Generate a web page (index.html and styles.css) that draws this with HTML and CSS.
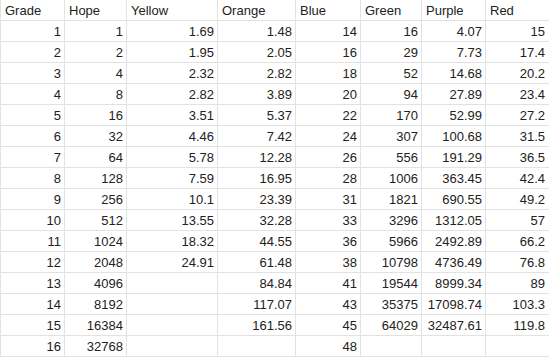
FILE: index.html
```html
<!DOCTYPE html>
<html lang="en">
<head>
<meta charset="UTF-8">
<title>Grades</title>
<link rel="stylesheet" href="styles.css">
</head>
<body>
<table class="sheet">
    <colgroup>
        <col class="c1"><col class="c2"><col class="c3"><col class="c4">
        <col class="c5"><col class="c6"><col class="c7"><col class="c8">
    </colgroup>
    <thead>
        <tr>
            <th class="first">Grade</th><th>Hope</th><th>Yellow</th><th>Orange</th>
            <th>Blue</th><th>Green</th><th>Purple</th><th class="last">Red</th>
        </tr>
    </thead>
    <tbody>
        <tr><td class="first">1</td><td>1</td><td>1.69</td><td>1.48</td><td>14</td><td>16</td><td>4.07</td><td class="last">15</td></tr>
        <tr><td class="first">2</td><td>2</td><td>1.95</td><td>2.05</td><td>16</td><td>29</td><td>7.73</td><td class="last">17.4</td></tr>
        <tr><td class="first">3</td><td>4</td><td>2.32</td><td>2.82</td><td>18</td><td>52</td><td>14.68</td><td class="last">20.2</td></tr>
        <tr><td class="first">4</td><td>8</td><td>2.82</td><td>3.89</td><td>20</td><td>94</td><td>27.89</td><td class="last">23.4</td></tr>
        <tr><td class="first">5</td><td>16</td><td>3.51</td><td>5.37</td><td>22</td><td>170</td><td>52.99</td><td class="last">27.2</td></tr>
        <tr><td class="first">6</td><td>32</td><td>4.46</td><td>7.42</td><td>24</td><td>307</td><td>100.68</td><td class="last">31.5</td></tr>
        <tr><td class="first">7</td><td>64</td><td>5.78</td><td>12.28</td><td>26</td><td>556</td><td>191.29</td><td class="last">36.5</td></tr>
        <tr><td class="first">8</td><td>128</td><td>7.59</td><td>16.95</td><td>28</td><td>1006</td><td>363.45</td><td class="last">42.4</td></tr>
        <tr><td class="first">9</td><td>256</td><td>10.1</td><td>23.39</td><td>31</td><td>1821</td><td>690.55</td><td class="last">49.2</td></tr>
        <tr><td class="first">10</td><td>512</td><td>13.55</td><td>32.28</td><td>33</td><td>3296</td><td>1312.05</td><td class="last">57</td></tr>
        <tr><td class="first">11</td><td>1024</td><td>18.32</td><td>44.55</td><td>36</td><td>5966</td><td>2492.89</td><td class="last">66.2</td></tr>
        <tr><td class="first">12</td><td>2048</td><td>24.91</td><td>61.48</td><td>38</td><td>10798</td><td>4736.49</td><td class="last">76.8</td></tr>
        <tr><td class="first">13</td><td>4096</td><td></td><td>84.84</td><td>41</td><td>19544</td><td>8999.34</td><td class="last">89</td></tr>
        <tr><td class="first">14</td><td>8192</td><td></td><td>117.07</td><td>43</td><td>35375</td><td>17098.74</td><td class="last">103.3</td></tr>
        <tr><td class="first">15</td><td>16384</td><td></td><td>161.56</td><td>45</td><td>64029</td><td>32487.61</td><td class="last">119.8</td></tr>
        <tr><td class="first">16</td><td>32768</td><td></td><td></td><td>48</td><td></td><td></td><td class="last"></td></tr>
    </tbody>
</table>
</body>
</html>
```

FILE: styles.css
```css
body {
    margin: 0;
    padding: 0;
    background-color: #fff;
}

* {
    font-family: "Liberation Sans", Arial, sans-serif;
    box-sizing: border-box;
}

.sheet {
    border-collapse: separate;
    border-spacing: 0;
    table-layout: fixed;
    width: 549px;
    color: #222;
    font-size: 13px;
}

.c1 { width: 65px; }
.c2 { width: 62px; }
.c3 { width: 91px; }
.c4 { width: 78px; }
.c5 { width: 65px; }
.c6 { width: 61px; }
.c7 { width: 64px; }
.c8 { width: 63px; }

.sheet th,
.sheet td {
    height: 21px;
    padding: 0 3px;
    border-right: 1px solid #e2e2e2;
    border-bottom: 1px solid #e2e2e2;
    white-space: nowrap;
    overflow: hidden;
}

.sheet th {
    font-weight: normal;
    text-align: left;
    padding-left: 4px;
}

.sheet td {
    text-align: right;
}

.sheet .first {
    border-left: 1px solid #e2e2e2;
}

.sheet .last {
    border-right: none;
    padding-right: 4px;
}
```
